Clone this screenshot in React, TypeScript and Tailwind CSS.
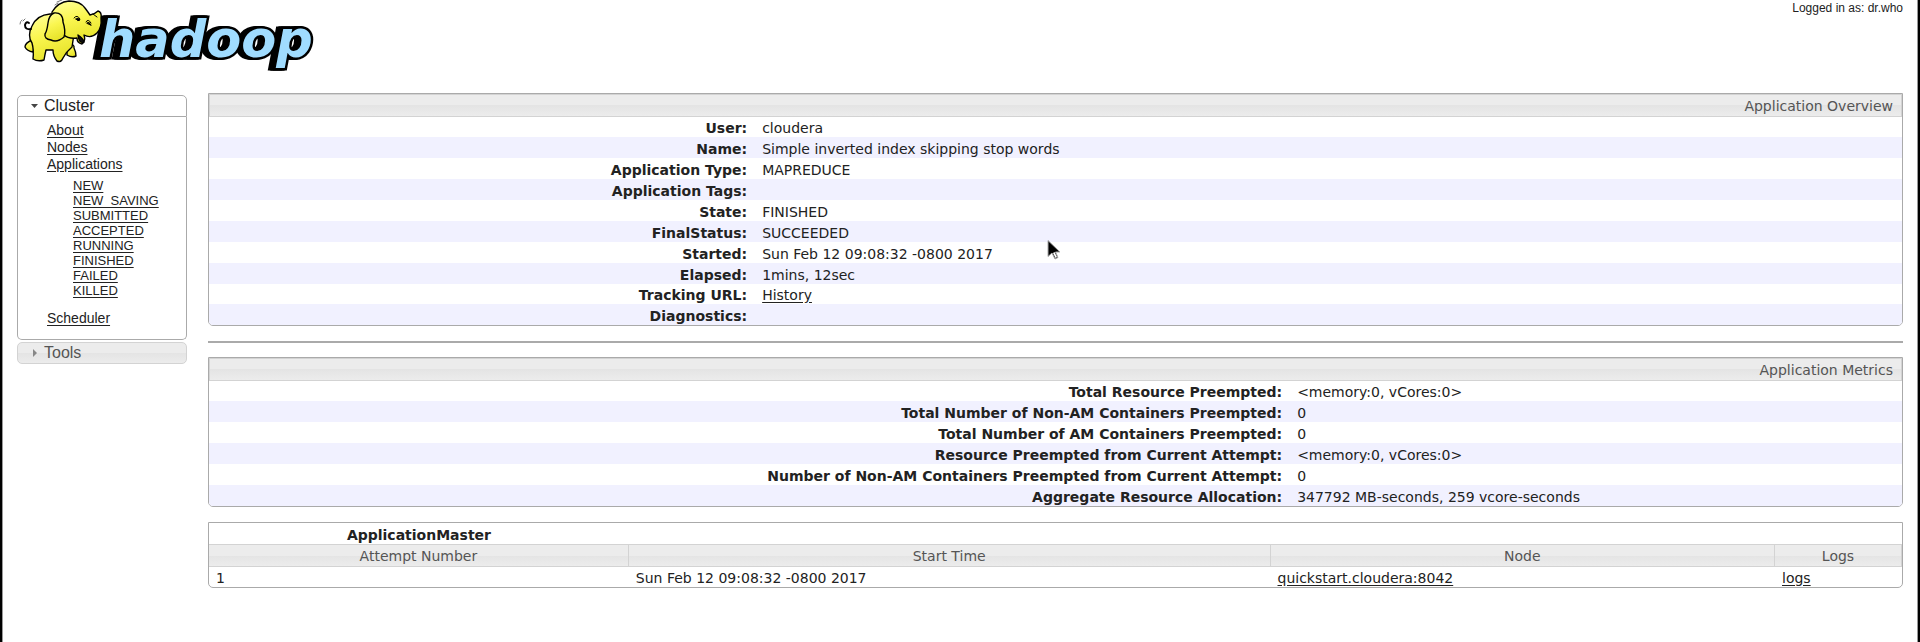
import React from "react";

type Field = { label: string; value: string; href?: string };

const overview: Field[] = [
  { label: "User:", value: "cloudera" },
  { label: "Name:", value: "Simple inverted index skipping stop words" },
  { label: "Application Type:", value: "MAPREDUCE" },
  { label: "Application Tags:", value: "" },
  { label: "State:", value: "FINISHED" },
  { label: "FinalStatus:", value: "SUCCEEDED" },
  { label: "Started:", value: "Sun Feb 12 09:08:32 -0800 2017" },
  { label: "Elapsed:", value: "1mins, 12sec" },
  { label: "Tracking URL:", value: "History", href: "#history" },
  { label: "Diagnostics:", value: "" },
];

const metrics: Field[] = [
  { label: "Total Resource Preempted:", value: "<memory:0, vCores:0>" },
  { label: "Total Number of Non-AM Containers Preempted:", value: "0" },
  { label: "Total Number of AM Containers Preempted:", value: "0" },
  { label: "Resource Preempted from Current Attempt:", value: "<memory:0, vCores:0>" },
  { label: "Number of Non-AM Containers Preempted from Current Attempt:", value: "0" },
  { label: "Aggregate Resource Allocation:", value: "347792 MB-seconds, 259 vcore-seconds" },
];

const states = ["NEW", "NEW_SAVING", "SUBMITTED", "ACCEPTED", "RUNNING", "FINISHED", "FAILED", "KILLED"];

const link = "underline underline-offset-2";
const bar = "bg-[linear-gradient(#ececec_0%,#ececec_50%,#e4e4e4_50%,#ececec_100%)]";

function Logo() {
  return (
    <svg width="330" height="72" viewBox="0 0 330 72" role="img" aria-label="Hadoop" className="block">
      <defs>
        <linearGradient id="hide" x1="0" y1="0" x2="0.3" y2="1">
          <stop offset="0" stopColor="#ffff9c" />
          <stop offset="0.5" stopColor="#faf650" />
          <stop offset="1" stopColor="#e8e42c" />
        </linearGradient>
      </defs>
      <text
        x="99"
        y="57"
        fill="#a0dcff"
        stroke="#000"
        strokeWidth="5"
        paintOrder="stroke"
        className="font-['DejaVu_Sans',Verdana,sans-serif] text-[51px] font-bold italic [filter:drop-shadow(-2px_0_0_#000)_drop-shadow(-3px_0_0_#000)]"
      >
        hadoop
      </text>
      <g fill="url(#hide)" stroke="#000" strokeWidth="1.4" strokeLinejoin="round" strokeLinecap="round">
        <path d="M67 43 Q75 44 74 48 Q76 52 76 56 Q72 58 67 55 Z" />
        <path d="M32 40 Q25 43 25 47 Q27 51 33 52 L35 45 Z" />
        <path d="M50 14 Q37 15 32 26 Q27 36 32 43 Q34 50 33 59 Q38 62 44 60 Q45 54 46 50 L53 50 Q53 56 57 61 Q61 63 63 58 Q66 52 72 47 L74 34 L60 14 Z" />
        <path d="M52 12 Q58 2 69 1 Q80 1 85 8 Q88 12 90 15 Q95 14 98 11 Q102 12 101 18 Q102 28 97 33 Q91 39 84 35 Q86 41 82 44 Q77 43 77 38 Q68 39 64 35 Q52 30 52 12 Z" />
        <path d="M54 13 Q63 12 63 22 Q66 31 64 37 Q57 43 51 40 Q44 39 45 34 Q47 31 48 23 Q49 15 54 13 Z" />
        <path d="M78 35 Q83 38 84 42 Q79 44 78 35 Z" fill="#111" />
        <path d="M31 29 Q25 30 25 25 Q26 21 29 23" fill="none" strokeWidth="2" />
        <path d="M74 18 Q77 14 80 19 M86 22 Q88 18 91 23 M93 14 L97 17" fill="none" strokeWidth="1" />
        <path d="M20 24 Q20 21 22 20 M23 21 L25 19 M55 5 L58 3 M57 2 L62 0" fill="none" stroke="#777" strokeWidth="1" />
        <path d="M76 19 Q78 17 80 20 Q78 22 76 19 Z M87 23 Q89 21 91 25 Z" fill="#000" strokeWidth="1" />
      </g>
    </svg>
  );
}

function Pointer() {
  return (
    <svg width="15" height="20" viewBox="0 0 15 20" aria-hidden="true" className="pointer-events-none absolute top-[240px] left-[1045px]">
      <path d="M1 0.500V16.500L5 13L8 19L11 17.500L8.500 12H13Z" fill="#000" stroke="#aaa" strokeWidth="1" />
      <path d="M6 13L8.500 18L10 17L7.500 12Z" fill="#fff" />
    </svg>
  );
}

function InfoPanel({ title, rows, labelWidth }: { title: string; rows: Field[]; labelWidth: string }) {
  return (
    <table className="w-full table-fixed border-separate border-spacing-0 overflow-hidden rounded-b-[5px] border border-[#aaaaaa] text-left">
      <colgroup>
        <col className={labelWidth} />
        <col />
      </colgroup>
      <thead>
        <tr>
          <th colSpan={2} className={"h-[23px] border border-[#d3d3d3] pt-[2px] pr-2 text-right font-normal text-[#555555] " + bar}>
            {title}
          </th>
        </tr>
      </thead>
      <tbody>
        {rows.map((r) => (
          <tr key={r.label} className="h-[21px] even:bg-[#f1f1ff] nth-[8n+1]:h-[20px]">
            <th scope="row" className="pt-[3px] pr-[7px] text-right font-bold">{r.label}</th>
            <td className="pt-[3px] pl-2">{r.href ? <a href={r.href} className={link}>{r.value}</a> : r.value}</td>
          </tr>
        ))}
      </tbody>
    </table>
  );
}

function Sidebar() {
  return (
    <nav className="mt-[2px] w-[170px] shrink-0 font-['Liberation_Sans',Arial,sans-serif] text-sm leading-[17px]">
      <button type="button" aria-expanded="true" className="flex h-[22px] w-full items-center gap-[5px] rounded-t-[5px] border border-[#aaaaaa] bg-white pl-3 text-base">
        <svg width="9" height="5" viewBox="0 0 9 5" aria-hidden="true" className="block"><path d="M1 0H8L4.500 4Z" fill="#454545" /></svg>
        Cluster
      </button>
      <div className="rounded-b-[5px] border border-t-0 border-[#aaaaaa] pt-[5px] pb-3 pl-[29px]">
        <ul>
          <li><a href="#about" className={link}>About</a></li>
          <li><a href="#nodes" className={link}>Nodes</a></li>
          <li>
            <a href="#apps" className={link}>Applications</a>
            <ul className="mt-[5px] mb-2 pl-[26px] text-[13px]">
              {states.map((s) => (
                <li key={s} className="leading-[15px]"><a href={"#" + s} className={link}>{s}</a></li>
              ))}
            </ul>
          </li>
          <li className="pt-1"><a href="#scheduler" className={link}>Scheduler</a></li>
        </ul>
      </div>
      <button type="button" aria-expanded="false" className={"mt-[2px] flex h-[22px] w-full items-center gap-[5px] rounded-[5px] border border-[#d3d3d3] pl-3 text-base text-[#555555] " + bar}>
        <svg width="9" height="8" viewBox="0 0 9 8" aria-hidden="true" className="block"><path d="M3 0V8L7 4Z" fill="#888888" /></svg>
        Tools
      </button>
    </nav>
  );
}

const head = "h-[23px] border-y border-r border-[#d3d3d3] pt-[2px] font-normal text-[#555555] " + bar;
const cell = "h-[20px] px-[7px] pt-[2px]";

export default function App() {
  return (
    <div className="relative min-h-screen border-x-2 border-black bg-white font-['DejaVu_Sans',Verdana,sans-serif] text-sm leading-[17px] text-[#222222]">
      <div className="min-h-screen border-x border-[#999999] px-[14px]">
        <header className="flex justify-between">
          <div className="-ml-[17px]"><Logo /></div>
          <p className="font-['Liberation_Sans',Arial,sans-serif] text-xs leading-4">Logged in as: dr.who</p>
        </header>
        <div className="mt-[21px] flex gap-[21px]">
          <Sidebar />
          <main className="min-w-0 grow">
            <InfoPanel title="Application Overview" rows={overview} labelWidth="w-[32.2%]" />
            <hr className="mt-[15px] mb-[14px] border-t-2 border-[#aaaaaa]" />
            <InfoPanel title="Application Metrics" rows={metrics} labelWidth="w-[63.8%]" />
            <table className="mt-[15px] w-full table-fixed border-separate border-spacing-0 overflow-hidden rounded-b-[5px] border border-[#aaaaaa] text-left">
              <colgroup>
                <col className="w-[24.8%]" />
                <col className="w-[37.9%]" />
                <col className="w-[29.8%]" />
                <col className="w-[7.5%]" />
              </colgroup>
              <thead>
                <tr>
                  <th className="h-[21px] pt-[3px] text-center font-bold">ApplicationMaster</th>
                  <td colSpan={3} />
                </tr>
                <tr className="text-center">
                  <th className={head}>Attempt Number</th>
                  <th className={head}>Start Time</th>
                  <th className={head}>Node</th>
                  <th className={head}>Logs</th>
                </tr>
              </thead>
              <tbody>
                <tr>
                  <td className={cell}>1</td>
                  <td className={cell}>Sun Feb 12 09:08:32 -0800 2017</td>
                  <td className={cell}><a href="#node" className={link}>quickstart.cloudera:8042</a></td>
                  <td className={cell}><a href="#logs" className={link}>logs</a></td>
                </tr>
              </tbody>
            </table>
          </main>
        </div>
      </div>
      <Pointer />
    </div>
  );
}
